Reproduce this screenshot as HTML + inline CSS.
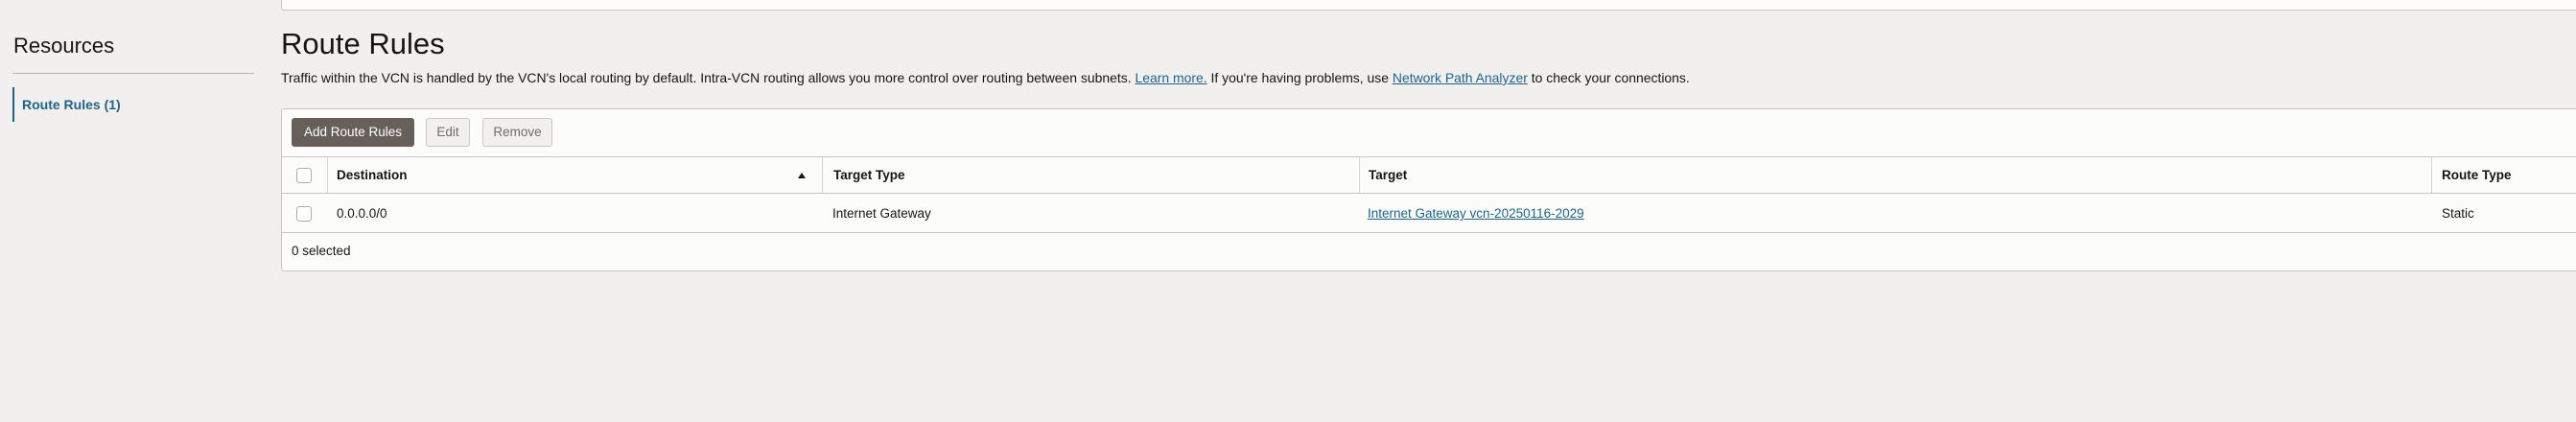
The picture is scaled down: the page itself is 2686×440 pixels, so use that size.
<!DOCTYPE html>
<html><head><meta charset="utf-8"><style>
*{margin:0;padding:0;box-sizing:border-box}
body{width:2686px;height:440px;background:#f1f0ee;font-family:"Liberation Sans",Arial,sans-serif;color:#161513;position:relative;overflow:hidden}
.a{position:absolute}
.top{left:293px;top:-2px;width:2400px;height:13px;background:#fcfcfb;border:1px solid #c8c6c3;border-top:none;border-radius:0 0 3px 3px}
.res{left:14px;top:35px;font-size:22px}
.sep{left:13px;top:76px;width:252px;height:1px;background:#b8b6b3}
.nav{left:13px;top:91px;height:36px;border-left:2px solid #1e6584;padding-left:8px;line-height:36px;font-size:14px;font-weight:bold;color:#1e6584}
h1{position:absolute;left:293px;top:28px;font-size:31px;font-weight:normal}
.desc{left:293px;top:73px;font-size:13.95px;white-space:nowrap}
a{color:#1e6584;text-decoration:underline}
.panel{left:293px;top:113px;width:2400px;height:170px;background:#fcfcfb;border:1px solid #c8c6c3;border-radius:3px}
.btn{top:123px;height:30px;border-radius:3px;font-size:13.5px;line-height:28px;text-align:center}
.b1{left:304px;width:128px;background:#675f5a;color:#fff;border:1px solid #675f5a}
.b2{left:444px;width:46px;background:#f1f0ee;color:#6f6c69;border:1px solid #ccc9c5}
.b3{left:503px;width:73px;background:#f1f0ee;color:#6f6c69;border:1px solid #ccc9c5}
.hl{left:293px;width:2400px;height:1px;background:#c8c6c3}
.vl{top:163px;width:1px;height:38px;background:#d6d4d1}
.cb{left:309px;width:16px;height:16px;border:1px solid #b0aeab;border-radius:3px;background:#fff}
.t{font-size:13.5px;white-space:nowrap}
.h{font-weight:bold}
</style></head><body>
<div class="a top"></div>
<div class="a res">Resources</div>
<div class="a sep"></div>
<div class="a nav">Route Rules (1)</div>
<h1>Route Rules</h1>
<div class="a desc">Traffic within the VCN is handled by the VCN's local routing by default. Intra-VCN routing allows you more control over routing between subnets. <a>Learn more.</a> If you're having problems, use <a>Network Path Analyzer</a> to check your connections.</div>
<div class="a panel"></div>
<div class="a btn b1">Add Route Rules</div>
<div class="a btn b2">Edit</div>
<div class="a btn b3">Remove</div>
<div class="a hl" style="top:163px"></div>
<div class="a hl" style="top:201px"></div>
<div class="a hl" style="top:242px"></div>
<div class="a vl" style="left:341px"></div>
<div class="a vl" style="left:857px"></div>
<div class="a vl" style="left:1417px"></div>
<div class="a vl" style="left:2535px"></div>
<div class="a cb" style="top:175px"></div>
<div class="a cb" style="top:215px"></div>
<div class="a t h" style="left:351px;top:175px">Destination</div>
<div class="a" style="left:832px;top:180px;width:0;height:0;border-left:4px solid transparent;border-right:4px solid transparent;border-bottom:6px solid #161513"></div>
<div class="a t h" style="left:869px;top:175px">Target Type</div>
<div class="a t h" style="left:1427px;top:175px">Target</div>
<div class="a t h" style="left:2546px;top:175px">Route Type</div>
<div class="a t" style="left:351px;top:215px">0.0.0.0/0</div>
<div class="a t" style="left:868px;top:215px">Internet Gateway</div>
<div class="a t" style="left:1426px;top:215px"><a>Internet Gateway vcn-20250116-2029</a></div>
<div class="a t" style="left:2546px;top:215px">Static</div>
<div class="a t" style="left:304px;top:254px">0 selected</div>
</body></html>
